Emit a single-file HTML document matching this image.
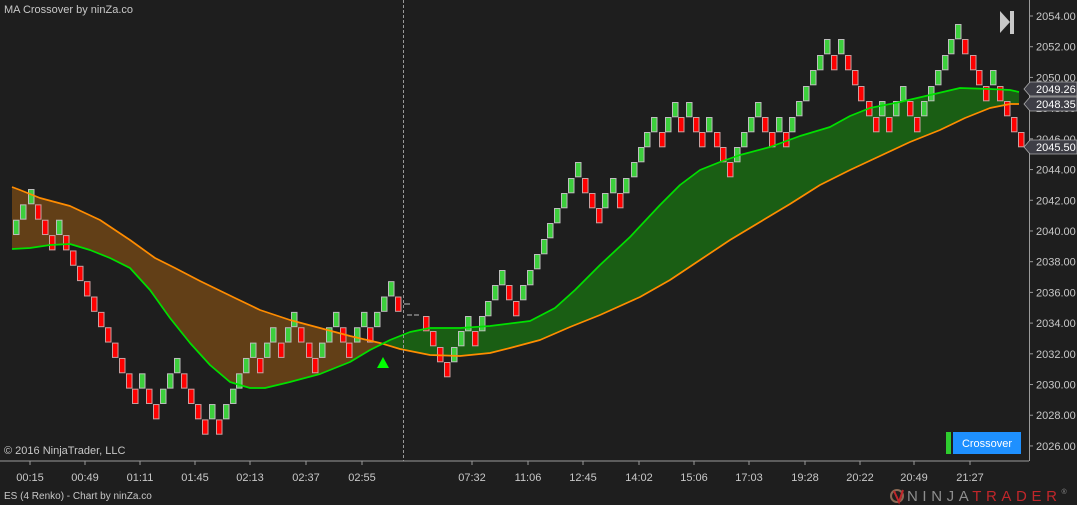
<!DOCTYPE html>
<html><head><meta charset="utf-8">
<style>
html,body{margin:0;padding:0;background:#1e1e1e;width:1077px;height:505px;overflow:hidden;font-family:"Liberation Sans",sans-serif}
svg{display:block}
</style></head><body>
<svg id="s" width="1077" height="505" xmlns="http://www.w3.org/2000/svg" font-family="Liberation Sans, sans-serif">
<rect width="1077" height="505" fill="#1e1e1e"/>
<defs>
<clipPath id="cl"><rect x="0" y="0" width="383" height="461"/></clipPath>
<clipPath id="cr"><rect x="383" y="0" width="700" height="461"/></clipPath>
</defs>
<g id="fills"></g>
<g id="bricks"></g>
<g id="lines"></g>
<line x1="0" y1="461" x2="1029" y2="461" stroke="#9a9a9a" stroke-width="1"/>
<line x1="1029.5" y1="0" x2="1029.5" y2="461" stroke="#9a9a9a" stroke-width="1"/>
<line x1="403.5" y1="0" x2="403.5" y2="461" stroke="#9a9a9a" stroke-width="1" stroke-dasharray="3,2"/>
<line x1="404" y1="304" x2="410" y2="304" stroke="#bbb"/>
<line x1="407" y1="315" x2="420" y2="315" stroke="#bbb" stroke-dasharray="5,2"/>
<g id="axis" fill="#c8c8c8" font-size="11"></g>
<text x="4" y="13" fill="#c8c8c8" font-size="11">MA Crossover by ninZa.co</text>
<text x="4" y="454" fill="#c8c8c8" font-size="11">© 2016 NinjaTrader, LLC</text>
<text x="4" y="499" fill="#c8c8c8" font-size="10">ES (4 Renko) - Chart by ninZa.co</text>
<polygon points="1000,11 1010,22 1000,33" fill="#c8c8c8"/>
<rect x="1010" y="11" width="4" height="23" fill="#c8c8c8"/>
<polygon points="383,357 377,368 389,368" fill="#00ff00"/>
<rect x="946" y="432" width="5" height="22" fill="#2ecc2e"/>
<rect x="953" y="432" width="68" height="22" fill="#1e90ff"/>
<text x="987" y="447" fill="#fff" font-size="11" text-anchor="middle">Crossover</text>
<g font-size="11" fill="#fff">
<path d="M1024,89 L1030,82 L1077,82 L1077,96 L1030,96 Z" fill="#3e3e46" stroke="#aaa" stroke-width="0.8"/>
<text x="1036" y="93">2049.26</text>
<path d="M1024,104 L1030,97 L1077,97 L1077,111 L1030,111 Z" fill="#3e3e46" stroke="#aaa" stroke-width="0.8"/>
<text x="1036" y="108">2048.35</text>
<path d="M1024,147 L1030,140 L1077,140 L1077,154 L1030,154 Z" fill="#3e3e46" stroke="#aaa" stroke-width="0.8"/>
<text x="1036" y="151">2045.50</text>
</g>
<circle cx="897" cy="496" r="6" fill="none" stroke="#8a6a55" stroke-width="2"/>
<path d="M894,491 L899,502 L903,490" fill="none" stroke="#c0262a" stroke-width="2"/>
<text x="907" y="501" font-size="15" fill="#8e8e8e" letter-spacing="4.6">NINJA<tspan fill="#c0262a">TRADER</tspan><tspan font-size="7" dy="-7" letter-spacing="0">®</tspan></text>
</svg>
<script>
var NS="http://www.w3.org/2000/svg";
function el(t,a,p){var e=document.createElementNS(NS,t);for(var k in a)e.setAttribute(k,a[k]);(p||document.getElementById('s')).appendChild(e);return e;}
var B=document.getElementById('bricks');
var L="14g2,21g1,29g0,36r1,43r2,50r3,57g2,64r3,71r4,78r5,85r6,92r7,99r8,106r9,113r10,120r11,127r12,133r13,140g12,147r13,154r14,161g13,168g12,175g11,182r12,189r13,196r14,203r15,210g14,217r15,224g14,231g13,237g12,244g11,251g10,258r11,265g10,271g9,279r10,286g9,292g8,299r9,307r10,313r11,320g10,327g9,334g8,341r9,347r10,355g9,362g8,368r9,375g8,382g7,389g6,396r7";
L.split(',').forEach(function(s){var m=s.match(/(\d+)([gr])(\d+)/);add(+m[1],m[2],189+(+m[3])*15.36);});
var R="424r316,431r331,438r347,445r362,452g347,459g331,466g316,473r331,480g316,486g301,493g285,500g270,507r285,514r301,521g285,528g270,535g254,542g239,548g223,555g208,562g193,569g178,576g162,583r178,590r193,597r208,603g193,611g178,618r193,624g178,632g162,639g147,645g132,652g117,660r132,666g117,673g102,679r117,687g102,694r117,700r132,707g117,715r132,721r147,728r162,735g147,742g132,749g117,756g102,763r117,770r132,777g117,784r132,790g117,797g101,804g86,811g70,818g55,825g39,832r55,839g39,846r55,853r70,859r86,867r101,874r117,880g101,887r117,894g101,901g86,908r101,915r117,922g101,929g86,936g70,943g55,949g39,956g24,963r39,971r55,977r70,984r86,991g70,998r86,1005r101,1012r117,1019r132";
R.split(',').forEach(function(s){var m=s.match(/(\d+)([gr])(\d+)/);add(+m[1],m[2],+m[3]);});
function add(x,c,t){el('rect',{x:x-0.5,y:t+0.5,width:5.5,height:14.3,fill:c=='g'?'#3ccf3c':'#ff0000',stroke:c=='g'?'#bdbdbd':'#c9a0a0','stroke-width':1},B);}
var O=[[12,187],[20,190],[40,198],[70,206],[100,220],[130,240],[155,258],[175,268],[200,281],[235,298],[260,310],[290,320],[320,328],[350,336],[380,343],[400,349],[430,355],[460,356],[490,353],[510,348],[540,340],[570,327],[600,315],[640,297],[670,280],[700,260],[730,240],[760,222],[790,204],[820,185],[850,170],[880,156],[910,142],[940,130],[965,118],[990,108],[1010,104],[1019,104]];
var G=[[12,249],[30,248],[50,245],[70,244],[90,250],[110,258],[130,268],[150,290],[170,318],[190,343],[210,365],[230,382],[250,388],[265,388],[290,382],[320,374],[350,362],[370,350],[390,340],[410,332],[430,328],[460,328],[490,326],[530,321],[555,308],[575,290],[600,265],[630,237],[660,205],[680,185],[700,170],[720,162],[740,155],[770,147],[800,136],[830,127],[850,116],[870,108],[900,102],[930,95],[960,88],[990,89],[1010,90],[1019,92]];
function pts(a){return a.map(function(p){return p[0]+','+p[1]}).join(' ');}
var poly=pts(O)+' '+pts(G.slice().reverse());
var F=document.getElementById('fills');
el('polygon',{points:poly,fill:'#623f17','clip-path':'url(#cl)'},F);
el('polygon',{points:poly,fill:'#1a5e14','clip-path':'url(#cr)'},F);
var LN=document.getElementById('lines');
el('polyline',{points:pts(O),fill:'none',stroke:'#ff8c00','stroke-width':1.7,'stroke-linejoin':'round'},LN);
el('polyline',{points:pts(G),fill:'none',stroke:'#00e000','stroke-width':1.7,'stroke-linejoin':'round'},LN);
var A=document.getElementById('axis');
for(var i=0;i<=14;i++){var p=2054-2*i,y=16+i*30.71;el('line',{x1:1029,y1:y,x2:1033,y2:y,stroke:'#9a9a9a'},A);var t=el('text',{x:1036,y:y+4},A);t.textContent=p+'.00';}
var T=[[30,'00:15'],[85,'00:49'],[140,'01:11'],[195,'01:45'],[250,'02:13'],[306,'02:37'],[362,'02:55'],[472,'07:32'],[528,'11:06'],[583,'12:45'],[639,'14:02'],[694,'15:06'],[749,'17:03'],[805,'19:28'],[860,'20:22'],[914,'20:49'],[970,'21:27']];
T.forEach(function(a){el('line',{x1:a[0],y1:461,x2:a[0],y2:465,stroke:'#9a9a9a'},A);var t=el('text',{x:a[0],y:481,'text-anchor':'middle'},A);t.textContent=a[1];});
</script>
</body></html>
